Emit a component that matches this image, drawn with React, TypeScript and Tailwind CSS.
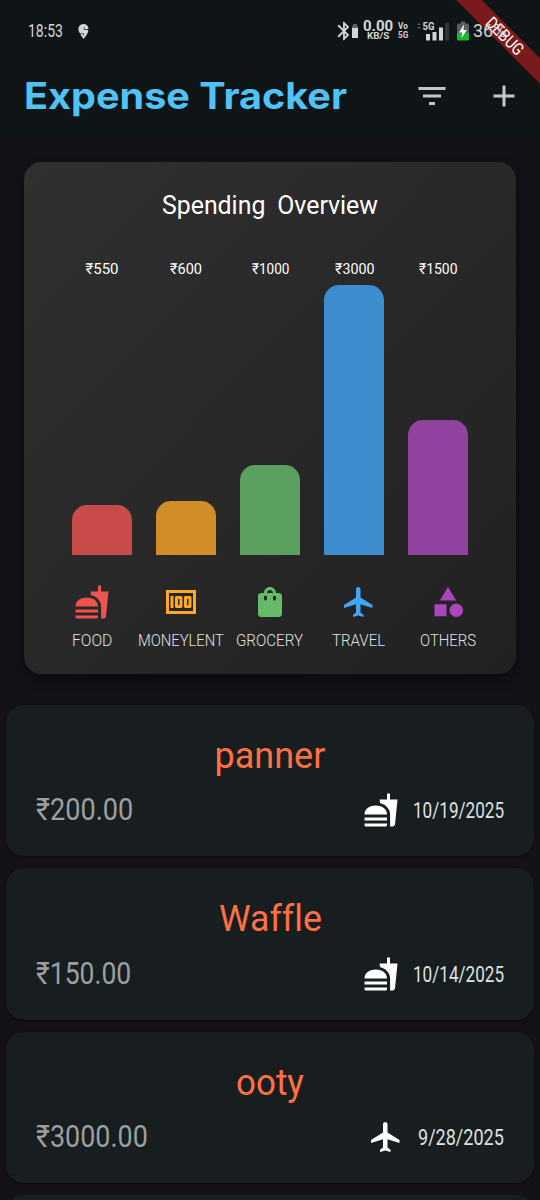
import { useLayoutEffect, useRef, useState } from "react";
import type { ComponentType } from "react";
import { MdAdd, MdBluetooth, MdCategory, MdFastfood, MdFilterList, MdFlight, MdMoney, MdShoppingBag } from "react-icons/md";
import { SiSwiggy } from "react-icons/si";

type Icon = ComponentType<{ className?: string }>;

/** One line of text condensed or widened to fill the width its className sets. */
function Fit({ text, className }: { text: string; className: string }) {
  const box = useRef<HTMLSpanElement>(null);
  const inner = useRef<HTMLSpanElement>(null);
  const [scale, setScale] = useState(1);
  useLayoutEffect(() => {
    if (box.current && inner.current) setScale(box.current.offsetWidth / inner.current.offsetWidth);
  }, [text]);
  return (
    <span ref={box} className={`block shrink-0 whitespace-nowrap [font-variant-ligatures:none] ${className}`}>
      <span ref={inner} className="inline-block origin-left" style={{ transform: `scaleX(${scale})` }}>
        {text}
      </span>
    </span>
  );
}

const bars = [
  { amount: "₹550", width: "w-[33px]", bar: "h-[49.5px] bg-[#c84b49]" },
  { amount: "₹600", width: "w-[32px]", bar: "h-[54px] bg-[#d18d27]" },
  { amount: "₹1000", width: "w-[37px]", bar: "h-[90px] bg-[#5ca05f]" },
  { amount: "₹3000", width: "w-[39px]", bar: "h-[270px] bg-[#3d8dcf]" },
  { amount: "₹1500", width: "w-[38px]", bar: "h-[135px] bg-[#90429e]" },
];

const categories: { name: string; width: string; color: string; Icon: Icon }[] = [
  { name: "FOOD", width: "w-[40px]", color: "text-[#ef5350]", Icon: MdFastfood },
  { name: "MONEYLENT", width: "w-[86px]", color: "text-[#ffa726]", Icon: MdMoney },
  { name: "GROCERY", width: "w-[67px]", color: "text-[#66bb6a]", Icon: MdShoppingBag },
  { name: "TRAVEL", width: "w-[53px]", color: "text-[#42a5f5]", Icon: MdFlight },
  { name: "OTHERS", width: "w-[56px]", color: "text-[#ab47bc]", Icon: MdCategory },
];

const expenses: { title: string; titleW: string; amount: string; amountW: string; date: string; dateW: string; Icon: Icon }[] = [
  { title: "panner", titleW: "w-[111px]", amount: "₹200.00", amountW: "w-[97px]", date: "10/19/2025", dateW: "w-[91px]", Icon: MdFastfood },
  { title: "Waffle", titleW: "w-[103px]", amount: "₹150.00", amountW: "w-[95px]", date: "10/14/2025", dateW: "w-[91px]", Icon: MdFastfood },
  { title: "ooty", titleW: "w-[68px]", amount: "₹3000.00", amountW: "w-[112px]", date: "9/28/2025", dateW: "w-[86px]", Icon: MdFlight },
];

function StatusBar() {
  return (
    <div className="relative z-10 flex h-[62px] items-center pl-7 text-[#d3d6d7]">
      <Fit text="18:53" className="w-[35px] text-[18px] leading-none" />
      <SiSwiggy className="ml-[13px] h-[17px] w-[15px]" />
      <div className="ml-[242px] flex items-center">
        <MdBluetooth className="-mr-[3px] h-[22px] w-[22px]" />
        <svg viewBox="0 0 6 14" className="h-[14px] w-[6px]">
          <path d="M1 0h4v2h1v2H0V2h1z" fill="#596062" />
          <path d="M0 4h6v10H0z" fill="currentColor" />
        </svg>
      </div>
      <div className="ml-[5px] flex w-[30px] flex-col items-center font-bold">
        <Fit text="0.00" className="w-[30px] text-[14px] leading-[11px]" />
        <Fit text="KB/S" className="w-[22px] text-[9px] leading-[9px]" />
      </div>
      <div className="ml-[5px] flex w-[10px] flex-col font-bold">
        <Fit text="Vo" className="w-[10px] text-[9px] leading-[9px]" />
        <Fit text="5G" className="w-[10px] text-[9px] leading-[9px]" />
      </div>
      <svg viewBox="0 0 34 20" className="ml-[7px] h-5 w-[34px]">
        <path d="M2 4l2-2 2 2zM2 6h4L4 8z" fill="#596062" />
        <text x="7.500" y="8.500" fontSize="10" fontWeight="700" textLength="12" lengthAdjust="spacingAndGlyphs" fill="currentColor">5G</text>
        <path d="M11 13h4v6.500h-4zM17.500 11h4v8.500h-4zM24 6.500h4v13h-4z" fill="currentColor" />
        <path d="M30 2h4v17.500h-4z" fill="#303537" />
      </svg>
      <svg viewBox="0 0 12 20" className="ml-[8px] h-5 w-3">
        <path d="M4 .5h4v2h2.500a1.500 1.500 0 0 1 1.500 1.500V12H0V4a1.500 1.500 0 0 1 1.500-1.500H4z" fill="#596062" />
        <path d="M0 12h12v6a1.500 1.500 0 0 1-1.500 1.500h-9A1.500 1.500 0 0 1 0 18z" fill="#1fb534" />
        <path d="M7 3.500L2 11.500h3.200L4.500 17l5.500-8H6.500z" fill="#fff" />
      </svg>
      <Fit text="36%" className="ml-[4px] w-[33px] text-[18px] leading-none" />
    </div>
  );
}

export default function App() {
  return (
    <div className="relative h-[1200px] w-[540px] overflow-hidden bg-[#141117] font-['Roboto','Noto_Sans',sans-serif]">
      <header className="h-[139px] bg-[#0f1416]">
        <StatusBar />
        <div className="flex h-[67px] items-center pr-[18px] pl-[24px] text-[#c2c6c7]">
          <Fit text="Expense Tracker" className="w-[323px] font-['Inter',sans-serif] text-[37px] leading-none font-bold text-[#4fc3f7]" />
          <MdFilterList className="ml-[67px] h-9 w-9" />
          <MdAdd className="ml-auto h-9 w-9" />
        </div>
      </header>
      <div className="absolute top-[26.500px] left-[429.500px] flex h-[18px] w-[150px] rotate-45 items-center justify-center bg-[#7b1a1b] text-white">
        <Fit text="DEBUG" className="w-[46px] text-[17px] leading-none" />
      </div>

      <section className="mx-6 mt-[23px] flex h-[512px] flex-col rounded-[18px] bg-linear-to-br from-[#303030] to-[#212121] px-6 shadow-[0_6px_12px_rgba(0,0,0,0.4)]">
        <h2 className="flex justify-center pt-[27px]">
          <Fit text="Spending Overview" className="w-[216px] text-[26px] leading-8 text-white [word-spacing:6px]" />
        </h2>
        <div className="mt-[40px] flex justify-center gap-6 text-white">
          {bars.map((b) => (
            <div key={b.amount} className="flex w-[60px] flex-col items-center">
              <Fit text={b.amount} className={`${b.width} text-[15px] leading-4`} />
              <div className="mt-[7.500px] flex h-[270px] w-full items-end">
                <div className={`w-full rounded-t-[15px] ${b.bar}`} />
              </div>
            </div>
          ))}
        </div>
        <div className="mt-[29px] grid grid-cols-5">
          {categories.map(({ name, width, color, Icon }) => (
            <div key={name} className="flex flex-col items-center">
              <Icon className={`h-9 w-9 ${color}`} />
              <Fit text={name} className={`mt-[13px] ${width} text-[16.500px] leading-4 font-light text-[#e0e0e0]`} />
            </div>
          ))}
        </div>
      </section>

      <ul className="mt-[30.500px] flex flex-col gap-3 px-1.5">
        {expenses.map(({ title, titleW, amount, amountW, date, dateW, Icon }) => (
          <li key={title} className="h-[151.500px] shrink-0 rounded-[18px] bg-[#181d1f] pt-[31px] pr-[30px] pl-[30px] shadow-[0_1px_3px_rgba(0,0,0,0.4)]">
            <div className="flex justify-center">
              <Fit text={title} className={`${titleW} text-[36px] leading-10 text-[#ff7043]`} />
            </div>
            <div className="mt-[16.500px] flex h-9 items-center">
              <Fit text={amount} className={`${amountW} text-[31px] leading-9 text-[#9b9fa0]`} />
              <Icon className="mr-[14px] ml-auto h-9 w-9 text-white" />
              <Fit text={date} className={`${dateW} pt-0.5 text-[22px] leading-9 text-[#dfe1e2]`} />
            </div>
          </li>
        ))}
        <li className="h-[151.500px] shrink-0 rounded-[18px] bg-[#181d1f]" />
      </ul>
    </div>
  );
}
